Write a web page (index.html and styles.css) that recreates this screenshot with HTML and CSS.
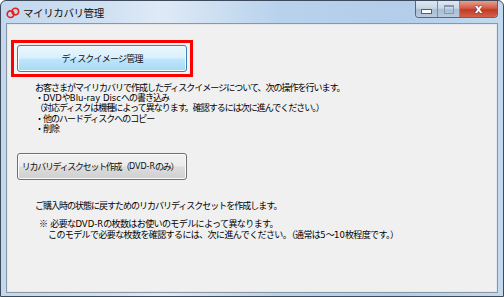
FILE: index.html
```html
<!DOCTYPE html>
<html lang="ja">
<head>
<meta charset="utf-8">
<link rel="stylesheet" href="styles.css">
</head>
<body>
<div class="window">
  <div class="titlebar">
    <div class="title">
      <svg class="logo" width="14" height="12" viewBox="0 0 14 12">
        <circle cx="4.5" cy="7.2" r="3.3" fill="none" stroke="#e8201c" stroke-width="1.6"/>
        <circle cx="9.3" cy="4.6" r="3.3" fill="none" stroke="#e8201c" stroke-width="1.6"/>
      </svg>
      <span class="title-text">マイリカバリ管理</span>
    </div>
    <div class="caption-btns">
      <div class="cbtn min"><span class="min-glyph"></span></div>
      <div class="cbtn max"><span class="max-glyph"></span></div>
      <div class="cbtn close"><span class="x">x</span></div>
    </div>
  </div>
  <div class="content">
    <div class="highlight">
      <div class="btn btn-blue">ディスクイメージ管理</div>
    </div>
    <div class="desc">
      <p>お客さまがマイリカバリで作成したディスクイメージについて、次の操作を行います。</p>
      <p>・<span class="lat">DVD</span>や<span class="lat">Blu-ray Disc</span>への書き込み</p>
      <p>（対応ディスクは機種によって異なります。確認するには次に進んでください。）</p>
      <p>・他のハードディスクへのコピー</p>
      <p>・削除</p>
    </div>
    <div class="btn btn-gray">リカバリディスクセット作成（<span class="lat">DVD-R</span>のみ）</div>
    <div class="desc2">
      <p>ご購入時の状態に戻すためのリカバリディスクセットを作成します。</p>
    </div>
    <div class="note">
      <p>※&nbsp;&nbsp;必要な<span class="lat">DVD-R</span>の枚数はお使いのモデルによって異なります。</p>
      <p class="indent">このモデルで必要な枚数を確認するには、次に進んでください。（通常は<span class="lat">5</span>～<span class="lat">10</span>枚程度です。）</p>
    </div>
  </div>
</div>
</body>
</html>
```
FILE: styles.css
```css
html, body {
  margin: 0;
  padding: 0;
  background: #fff;
}
body {
  font-family: "Noto Sans CJK JP", "Liberation Sans", sans-serif;
  color: #000;
}
p { margin: 0; }
.lat {
  letter-spacing: 0;
  font-family: "DejaVu Sans", "Noto Sans CJK JP", sans-serif;
  font-size: 8.5px;
}
.window {
  width: 504px;
  height: 297px;
  box-sizing: border-box;
  border: 1px solid #3d4a5c;
  border-radius: 6px 6px 0 0;
  background: linear-gradient(90deg, #c3d8ee 0%, #cfe0f2 20%, #dfeaf6 32%, #b9d2ec 55%, #b3cdea 80%, #c4d9ee 100%);
  display: flex;
  flex-direction: column;
  padding: 0 5px 3px 5px;
}
.titlebar {
  height: 22px;
  display: flex;
  justify-content: space-between;
  align-items: flex-start;
  flex-shrink: 0;
}
.title {
  display: flex;
  align-items: center;
  height: 22px;
}
.logo { margin: 1px 3px 0 0; }
.title-text {
  font-size: 10.5px;
  letter-spacing: -0.4px;
  color: #111;
}
.caption-btns {
  display: flex;
  height: 16px;
  border: 1px solid #5a6677;
  border-top: none;
  border-radius: 0 0 4px 4px;
  overflow: hidden;
}
.cbtn {
  height: 16px;
  display: flex;
  align-items: center;
  justify-content: center;
}
.min, .max {
  width: 21px;
  background: linear-gradient(#dfe8f2 0%, #c8d6e6 45%, #a9bdd4 55%, #b8cbe0 100%);
  border-right: 1px solid #7d8ca0;
}
.min-glyph {
  width: 9px;
  height: 3px;
  background: #fff;
  border: 1px solid #55606e;
  margin-top: 4px;
}
.max-glyph {
  width: 8px;
  height: 6px;
  border: 1px solid #8798ae;
  border-top-width: 2px;
}
.close {
  width: 37px;
  background: linear-gradient(#e8a08e 0%, #d25b46 45%, #c23a26 55%, #d0624a 100%);
}
.close .x {
  color: #fff;
  font-family: "DejaVu Sans", sans-serif;
  font-weight: bold;
  font-size: 12px;
  line-height: 12px;
  text-shadow: 0 0 1px #4a1a12, 0 0 1px #4a1a12;
}
.content {
  flex: 1;
  background: #f0f0f0;
  border: 1px solid #8c97a4;
  box-shadow: inset 0 0 0 1px #e4e8ec;
  padding: 16px 0 0 4px;
  display: flex;
  flex-direction: column;
  align-items: flex-start;
}
.highlight {
  border: 3px solid #ff0000;
  padding: 2px 3px;
  background: #f4f4f4;
}
.btn {
  width: 170px;
  height: 27px;
  box-sizing: border-box;
  border-radius: 3px;
  display: flex;
  align-items: center;
  justify-content: center;
  font-size: 9px;
  letter-spacing: -0.8px;
  color: #111;
  white-space: nowrap;
}
.btn-blue {
  border: 1px solid #3c7fb1;
  background: linear-gradient(#eaf6fd 0%, #d9f0fc 48%, #bee6fd 52%, #a7d9f5 100%);
  box-shadow: inset 0 0 0 1px #f4fbff;
}
.btn-gray {
  margin: 19px 0 0 6px;
  border: 1px solid #707070;
  background: linear-gradient(#f2f2f2 0%, #ebebeb 48%, #dddddd 52%, #cfcfcf 100%);
  box-shadow: inset 0 0 0 1px #fbfbfb;
  letter-spacing: -1.3px;
  padding-right: 4px;
}
.btn-gray .lat { font-size: 8px; }
.desc, .desc2, .note {
  font-size: 9px;
  line-height: 10.2px;
  letter-spacing: -1px;
  white-space: nowrap;
}
.desc { margin: 6px 0 0 24px; }
.desc2 { margin: 21px 0 0 24px; }
.note { margin: 8px 0 0 28px; line-height: 9.5px; letter-spacing: -0.6px; }
.note .indent { padding-left: 9px; }
```
